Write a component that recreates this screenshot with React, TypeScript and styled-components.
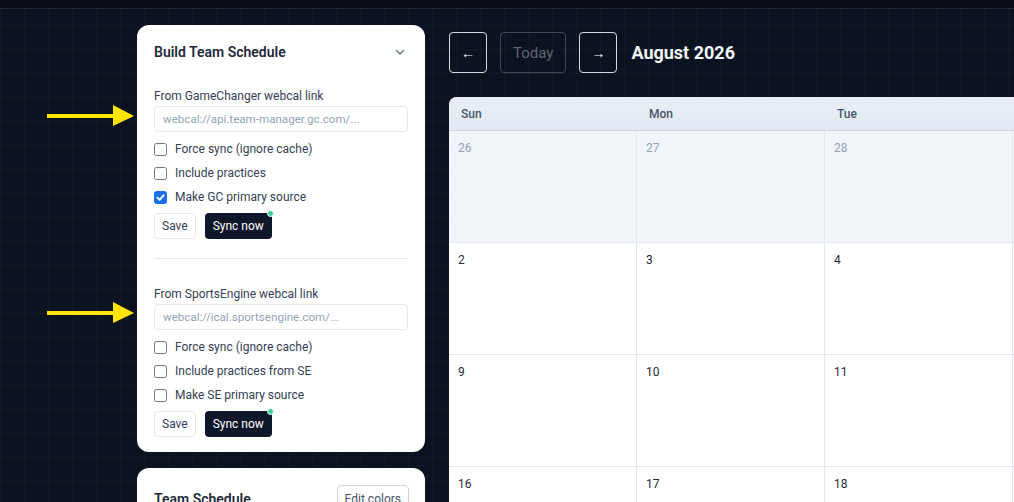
import React from "react";
import styled, { createGlobalStyle } from "styled-components";

const GlobalStyle = createGlobalStyle`
  html, body {
    margin: 0;
    padding: 0;
    overflow: hidden;
    width: 1014px;
    height: 502px;
  }
  body {
    background-color: #0c1320;
    background-image:
      linear-gradient(rgba(255,255,255,0.025) 1px, transparent 1px),
      linear-gradient(90deg, rgba(255,255,255,0.025) 1px, transparent 1px);
    background-size: 24px 24px;
    background-position: 0 1px;
    font-family: Roboto, "Noto Sans", "Liberation Sans", sans-serif;
    color: #1e293b;
  }
  * { box-sizing: border-box; }
`;

const TopBar = styled.div`
  height: 9px;
  background: #0a0e16;
  border-bottom: 1px solid #1f2733;
`;

const Main = styled.div`
  position: relative;
  display: flex;
  align-items: flex-start;
  gap: 24px;
  padding: 16px 0 0 137px;
`;

const Sidebar = styled.div`
  width: 288px;
  flex-shrink: 0;
  display: flex;
  flex-direction: column;
  gap: 16px;
`;

const Card = styled.div<{ $padTop?: number }>`
  background: #ffffff;
  border-radius: 12px;
  padding: ${(p) => p.$padTop ?? 16}px 16px 15px 17px;
`;

const CardHeader = styled.div`
  display: flex;
  align-items: center;
  justify-content: space-between;
  min-height: 22px;
`;

const CardTitle = styled.div`
  font-size: 14px;
  font-weight: 600;
  color: #1e293b;
`;

const Chevron = styled.span`
  display: flex;
  margin-right: 3px;
  color: #64748b;
`;

const Section = styled.div<{ $top: number }>`
  display: flex;
  flex-direction: column;
  margin-top: ${(p) => p.$top}px;
`;

const Label = styled.div`
  font-size: 12px;
  line-height: 18px;
  color: #334155;
`;

const Input = styled.input`
  margin-top: 1px;
  width: 254px;
  height: 26px;
  border: 1px solid #e2e8f0;
  border-radius: 4px;
  padding: 0 8px;
  font: inherit;
  font-size: 11.6px;
  color: #334155;
  outline: none;
  &::placeholder { color: #94a3b8; }
`;

const Checks = styled.div`
  display: flex;
  flex-direction: column;
  margin-top: 5px;
`;

const CheckRow = styled.label`
  display: flex;
  align-items: center;
  gap: 8px;
  height: 24px;
  font-size: 12px;
  color: #334155;
`;

const Box = styled.span<{ $on: boolean }>`
  width: 13px;
  height: 13px;
  border-radius: 2.5px;
  display: flex;
  align-items: center;
  justify-content: center;
  border: 1px solid ${(p) => (p.$on ? "#1a6ff0" : "#767676")};
  background: ${(p) => (p.$on ? "#1a6ff0" : "#ffffff")};
`;

const Buttons = styled.div`
  display: flex;
  gap: 9px;
  margin-top: 4px;
`;

const SaveBtn = styled.button`
  height: 26px;
  padding: 0 7px;
  background: #fff;
  border: 1px solid #e2e8f0;
  border-radius: 4px;
  font: inherit;
  font-size: 12px;
  color: #334155;
`;

const SyncBtn = styled.button`
  position: relative;
  height: 26px;
  padding: 0 8px;
  background: #0f172a;
  border: none;
  border-radius: 4px;
  font: inherit;
  font-size: 12px;
  color: #ffffff;
`;

const Dot = styled.span`
  position: absolute;
  top: -3px;
  right: -2px;
  width: 7px;
  height: 7px;
  border-radius: 50%;
  background: #34d399;
  border: 1px solid #ffffff;
`;

const Divider = styled.div`
  height: 1px;
  background: #e2e8f0;
  margin-top: 19px;
  width: 254px;
`;

const EditBtn = styled.button`
  height: 28px;
  padding: 0 7px;
  background: #fff;
  border: 1px solid #cbd5e1;
  border-radius: 4px;
  font: inherit;
  font-size: 12px;
  color: #475569;
`;

const CalColumn = styled.div`
  flex-shrink: 0;
  padding-top: 7px;
  display: flex;
  flex-direction: column;
  gap: 24px;
`;

const Nav = styled.div`
  display: flex;
  align-items: center;
  gap: 13px;
`;

const NavBtn = styled.button<{ $disabled?: boolean }>`
  height: 41px;
  min-width: 38px;
  padding: 0 ${(p) => (p.$disabled ? "12px" : "0")};
  background: transparent;
  border: 1px solid ${(p) => (p.$disabled ? "#3f4754" : "#d1d9e3")};
  border-radius: 4px;
  font: inherit;
  font-size: ${(p) => (p.$disabled ? "15px" : "14px")};
  color: ${(p) => (p.$disabled ? "#5b6473" : "#ffffff")};
`;

const Month = styled.div`
  margin-left: 1px;
  font-size: 18px;
  font-weight: 700;
  color: #f1f5f9;
`;

const Calendar = styled.div`
  width: 1316px;
  background: #ffffff;
  border-radius: 8px 8px 0 0;
  overflow: hidden;
  display: grid;
  grid-template-columns: repeat(7, 188px);
`;

const DayHead = styled.div`
  height: 34px;
  display: flex;
  align-items: center;
  padding-left: 12px;
  padding-top: 1px;
  background: linear-gradient(180deg, #e9eef6, #e3e9f2);
  border-bottom: 1px solid #cdd6e3;
  font-size: 12px;
  font-weight: 500;
  color: #475569;
`;

const Cell = styled.div<{ $muted: boolean }>`
  height: 112px;
  padding: 10px 9px;
  border-right: 1px solid #e2e8f0;
  border-bottom: 1px solid #e2e8f0;
  background: ${(p) => (p.$muted ? "#f1f5f9" : "#ffffff")};
  font-size: 12px;
  line-height: 14px;
  color: ${(p) => (p.$muted ? "#94a3b8" : "#1f2937")};
`;

const Pointer = styled.svg<{ $top: number }>`
  position: absolute;
  left: 46px;
  top: ${(p) => p.$top}px;
`;

const Check = () => (
  <svg width="9" height="9" viewBox="0 0 10 10">
    <path d="M1.5 5.2 L4 7.6 L8.6 2.4" fill="none" stroke="#fff" strokeWidth="2" strokeLinecap="round" strokeLinejoin="round" />
  </svg>
);

const Arrow = ({ top }: { top: number }) => (
  <Pointer $top={top} width="90" height="22" viewBox="0 0 90 22">
    <rect x="1" y="9" width="68" height="4" fill="#ffe500" />
    <polygon points="67,0 88,11 67,21" fill="#ffe500" />
  </Pointer>
);

type Opt = { label: string; on?: boolean };

const Source = ({ label, placeholder, opts, top }: { label: string; placeholder: string; opts: Opt[]; top: number }) => (
  <Section $top={top}>
    <Label>{label}</Label>
    <Input placeholder={placeholder} />
    <Checks>
      {opts.map((o) => (
        <CheckRow key={o.label}>
          <Box $on={!!o.on}>{o.on && <Check />}</Box>
          {o.label}
        </CheckRow>
      ))}
    </Checks>
    <Buttons>
      <SaveBtn>Save</SaveBtn>
      <SyncBtn>
        Sync now
        <Dot />
      </SyncBtn>
    </Buttons>
  </Section>
);

const days = ["Sun", "Mon", "Tue", "Wed", "Thu", "Fri", "Sat"];
const weeks = [
  [26, 27, 28, 29, 30, 31, 1],
  [2, 3, 4, 5, 6, 7, 8],
  [9, 10, 11, 12, 13, 14, 15],
  [16, 17, 18, 19, 20, 21, 22],
];

export default function App() {
  return (
    <>
      <GlobalStyle />
      <TopBar />
      <Main>
        <Arrow top={96} />
        <Arrow top={293} />
        <Sidebar>
          <Card>
            <CardHeader>
              <CardTitle>Build Team Schedule</CardTitle>
              <Chevron>
                <svg width="12" height="12" viewBox="0 0 12 12">
                  <path d="M2.5 4.5 L6 8 L9.5 4.5" fill="none" stroke="currentColor" strokeWidth="1.4" strokeLinecap="round" strokeLinejoin="round" />
                </svg>
              </Chevron>
            </CardHeader>
            <Source
              top={24}
              label="From GameChanger webcal link"
              placeholder="webcal://api.team-manager.gc.com/..."
              opts={[{ label: "Force sync (ignore cache)" }, { label: "Include practices" }, { label: "Make GC primary source", on: true }]}
            />
            <Divider />
            <Source
              top={26}
              label="From SportsEngine webcal link"
              placeholder="webcal://ical.sportsengine.com/..."
              opts={[{ label: "Force sync (ignore cache)" }, { label: "Include practices from SE" }, { label: "Make SE primary source" }]}
            />
          </Card>
          <Card $padTop={17}>
            <CardHeader>
              <CardTitle>Team Schedule</CardTitle>
              <EditBtn>Edit colors</EditBtn>
            </CardHeader>
          </Card>
        </Sidebar>
        <CalColumn>
          <Nav>
            <NavBtn>←</NavBtn>
            <NavBtn $disabled>Today</NavBtn>
            <NavBtn>→</NavBtn>
            <Month>August 2026</Month>
          </Nav>
          <Calendar>
            {days.map((d) => (
              <DayHead key={d}>{d}</DayHead>
            ))}
            {weeks.map((w, wi) =>
              w.map((n, di) => (
                <Cell key={`${wi}-${di}`} $muted={wi === 0 && n > 20}>
                  {n}
                </Cell>
              ))
            )}
          </Calendar>
        </CalColumn>
      </Main>
    </>
  );
}
